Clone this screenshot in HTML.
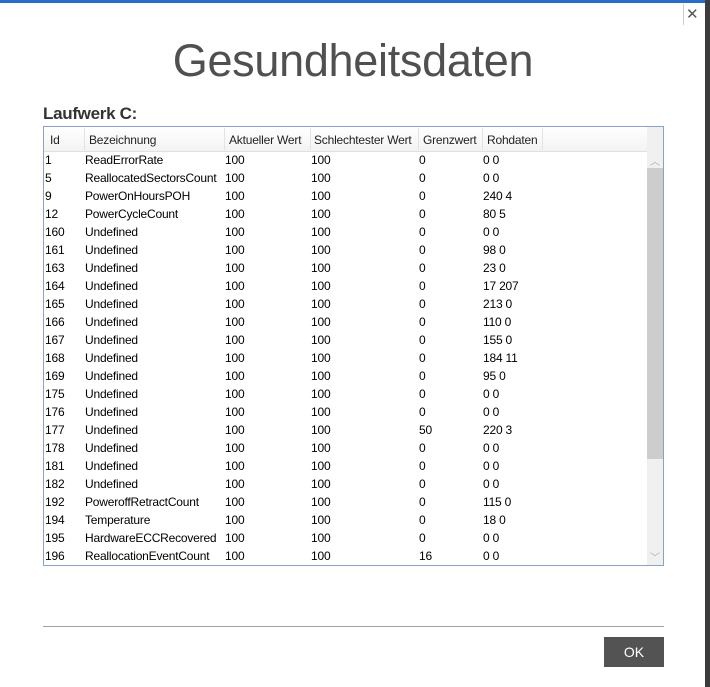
<!DOCTYPE html><html><head><style>
body{margin:0;width:710px;height:687px;background:#fff;position:relative;overflow:hidden;font-family:"Liberation Sans",sans-serif;}
.topbar{position:absolute;left:0;top:0;width:710px;height:3px;background:#2b6cc4}
.rs{position:absolute;left:705px;top:0;width:5px;height:687px;background:#3c3c3c}
.rs2{position:absolute;left:703px;top:3px;width:2px;height:684px;background:#fff}
h1{position:absolute;left:0;width:706px;top:35px;margin:0;text-align:center;font-weight:normal;font-size:45px;color:#505050;letter-spacing:-0.3px}
.lw{position:absolute;left:43px;top:104px;font-size:17px;font-weight:bold;color:#333;letter-spacing:-0.3px}
.tbl{position:absolute;left:43px;top:126px;width:619px;height:438px;border:1px solid #8aa3c4;overflow:hidden}
.hdr{position:absolute;left:0;top:0;width:603px;height:24px;background:linear-gradient(#fff,#f3f3f3);border-bottom:1px solid #e0e0e0}
.h{position:absolute;top:6px;font-size:12px;color:#222;letter-spacing:-0.2px}
.sep{position:absolute;top:1px;width:1px;height:22px;background:#e3e3e3}
.row{position:absolute;left:0;height:18px;font-size:12px;color:#000;letter-spacing:-0.2px}
.row span{position:absolute;top:2px;white-space:nowrap}
.sb{position:absolute;left:603px;top:0;width:16px;height:438px;background:#f0f0f0}
.th{position:absolute;left:603px;top:41px;width:16px;height:291px;background:#cdcdcd}
.ar{position:absolute;left:606px;font-size:10px;color:#aaa}
.line{position:absolute;left:43px;top:626px;width:621px;height:1px;background:#a0a0a0}
.ok{position:absolute;left:604px;top:637px;width:60px;height:30px;background:#535353;color:#fff;font-size:14px;text-align:center;line-height:30px}
.x{position:absolute;left:686px;top:5px;font-size:15px;color:#555}
.xl{position:absolute;left:683px;top:4px;width:1px;height:21px;background:#ccc}
</style></head><body>
<div class="topbar"></div><div class="rs"></div><div class="rs2"></div>
<div class="xl"></div><div class="x">✕</div>
<h1>Gesundheitsdaten</h1>
<div class="lw">Laufwerk C:</div>
<div class="tbl">
<div class="hdr">
<span class="h" style="left:6px">Id</span><div class="sep" style="left:40px"></div>
<span class="h" style="left:45px">Bezeichnung</span><div class="sep" style="left:180px"></div>
<span class="h" style="left:185px">Aktueller Wert</span><div class="sep" style="left:266px"></div>
<span class="h" style="left:270px">Schlechtester Wert</span><div class="sep" style="left:374px"></div>
<span class="h" style="left:379px">Grenzwert</span><div class="sep" style="left:438px"></div>
<span class="h" style="left:443px">Rohdaten</span><div class="sep" style="left:498px"></div>
</div>
<div id="rows"></div>
<div class="sb"></div><div class="th"></div>
<div class="ar" style="top:26px">︿</div><div class="ar" style="top:422px">﹀</div>
</div>
<div class="line"></div>
<div class="ok">OK</div>
<script>
var d=[["1","ReadErrorRate","0","0 0"],["5","ReallocatedSectorsCount","0","0 0"],["9","PowerOnHoursPOH","0","240 4"],["12","PowerCycleCount","0","80 5"],["160","Undefined","0","0 0"],["161","Undefined","0","98 0"],["163","Undefined","0","23 0"],["164","Undefined","0","17 207"],["165","Undefined","0","213 0"],["166","Undefined","0","110 0"],["167","Undefined","0","155 0"],["168","Undefined","0","184 11"],["169","Undefined","0","95 0"],["175","Undefined","0","0 0"],["176","Undefined","0","0 0"],["177","Undefined","50","220 3"],["178","Undefined","0","0 0"],["181","Undefined","0","0 0"],["182","Undefined","0","0 0"],["192","PoweroffRetractCount","0","115 0"],["194","Temperature","0","18 0"],["195","HardwareECCRecovered","0","0 0"],["196","ReallocationEventCount","16","0 0"]];
var h="";d.forEach(function(r,i){h+='<div class="row" style="top:'+(24+i*18)+'px"><span style="left:1px">'+r[0]+'</span><span style="left:41px">'+r[1]+'</span><span style="left:181px">100</span><span style="left:267px">100</span><span style="left:375px">'+r[2]+'</span><span style="left:439px">'+r[3]+'</span></div>'});
document.getElementById("rows").innerHTML=h;
</script>
</body></html>
